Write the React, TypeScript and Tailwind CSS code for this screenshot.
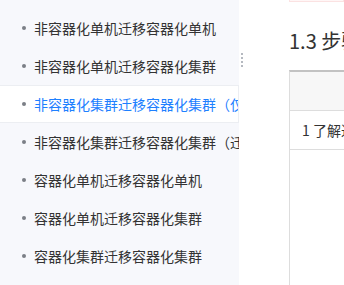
const items = [
  "非容器化单机迁移容器化单机",
  "非容器化单机迁移容器化集群",
  "非容器化集群迁移容器化集群（仅迁移数据）",
  "非容器化集群迁移容器化集群（迁移数据和配置）",
  "容器化单机迁移容器化单机",
  "容器化单机迁移容器化集群",
  "容器化集群迁移容器化集群",
];

const ACTIVE = 2;

export default function App() {
  return (
    <div
      className="flex h-[285px] w-[344px] overflow-hidden bg-white text-[14px] text-[#333]"
      style={{ fontFamily: '"Noto Sans CJK SC", "Noto Sans", sans-serif' }}
    >
      <aside className="w-[239px] shrink-0 bg-[#f7f8fc] pt-[9px]">
        {items.map((label, i) => (
          <div
            key={label}
            className={`flex h-[38px] items-center overflow-hidden whitespace-nowrap border-y pl-[22px] ${
              i === ACTIVE
                ? "w-[239px] border-r border-[#eceef2] bg-white text-[#1e80ff]"
                : "border-transparent"
            }`}
          >
            <span className="mr-[8px] h-[4px] w-[4px] shrink-0 rounded-full bg-[#7b7f86]" />
            <span className="leading-none">{label}</span>
          </div>
        ))}
      </aside>

      <main className="relative flex min-w-0 flex-1 flex-col">
        <div className="absolute left-[2px] top-[53px] flex flex-col gap-[2px]">
          {[0, 1, 2, 3].map((d) => (
            <span key={d} className="h-[2px] w-[2px] bg-[#b5b9c0]" />
          ))}
        </div>

        <div className="ml-[50px] flex flex-1 flex-col">
          <div className="h-[2px] border-x border-b border-[#fbe2e2] bg-[#fff6f6]" />
          <h3 className="mt-[29px] whitespace-nowrap text-[20px] leading-[20px] text-[#333]">
            1.3 步骤概览
          </h3>
          <div className="mt-[19px] flex flex-1 flex-col border-l border-t-2 border-l-[#dddddd] border-t-[#c2c2c2]">
            <div className="h-[39px] border-b border-[#dddddd] bg-[#f7f7f7]" />
            <div className="flex h-[39px] items-center whitespace-nowrap border-b border-[#dddddd] pl-[12px]">
              1 了解迁移流程
            </div>
          </div>
        </div>
      </main>
    </div>
  );
}
